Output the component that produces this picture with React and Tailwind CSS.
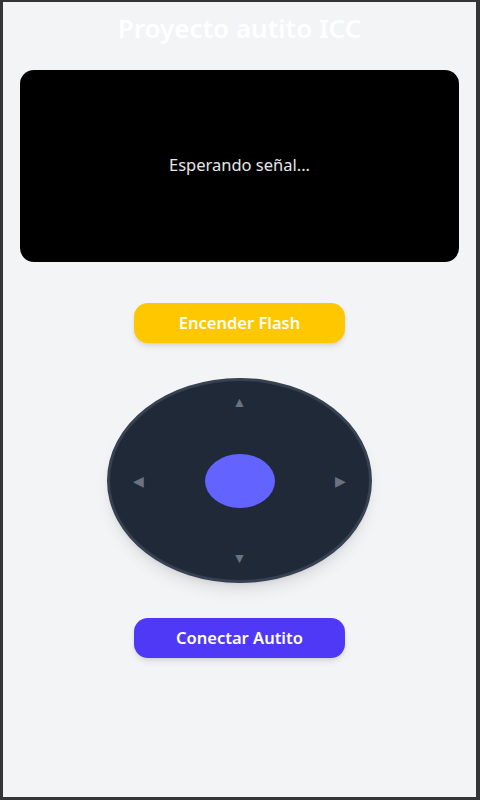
export default function App() {
  return (
    <div
      className="w-[480px] h-[800px] bg-[#f3f4f6] border-[#353535] border-l-[3px] border-t-[2px] border-r-[4px] border-b-[3px] flex flex-col items-center"
      style={{ fontFamily: '"Noto Sans", "Open Sans", sans-serif' }}
    >
      <h1 className="mt-[11px] text-[26px] leading-[30px] font-semibold text-white">
        Proyecto autito ICC
      </h1>

      {/* camera */}
      <div className="mt-[27px] w-[439px] h-[192px] bg-black rounded-[14px] flex items-center justify-center">
        <span className="text-[16.5px] text-gray-200 mt-[-2px]">Esperando señal...</span>
      </div>

      <button className="mt-[41px] w-[211px] h-[40px] rounded-[14px] bg-[#fec700] text-white text-[16.5px] font-semibold leading-none shadow-md">
        Encender Flash
      </button>

      {/* joystick */}
      <div className="mt-[35px] w-[265px] h-[205px] rounded-[50%] bg-[#1f2937] border-[3px] border-[#374151] shadow-lg relative flex items-center justify-center">
        <span className="absolute top-[14px] left-1/2 -translate-x-1/2 text-[#6b7280] text-[14px] leading-none">▲</span>
        <span className="absolute bottom-[15px] left-1/2 -translate-x-1/2 text-[#6b7280] text-[14px] leading-none">▼</span>
        <span className="absolute left-[23px] top-1/2 -translate-y-1/2 text-[#6b7280] text-[14px] leading-none">◀</span>
        <span className="absolute right-[23px] top-1/2 -translate-y-1/2 text-[#6b7280] text-[14px] leading-none">▶</span>
        <div className="w-[70px] h-[54px] rounded-[50%] bg-[#6363ff]" />
      </div>

      <button className="mt-[35px] w-[211px] h-[40px] rounded-[14px] bg-[#4f39f6] text-white text-[16.5px] font-semibold leading-none shadow-md">
        Conectar Autito
      </button>
    </div>
  );
}
